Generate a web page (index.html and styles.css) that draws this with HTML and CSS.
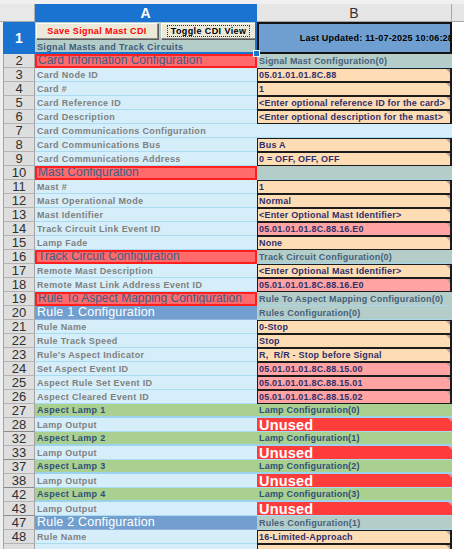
FILE: index.html
```html
<!DOCTYPE html>
<html>
<head>
<meta charset="utf-8">
<link rel="stylesheet" href="styles.css">
</head>
<body>
<div class="sheet">
  <div class="row hdr">
    <div class="corner"></div>
    <div class="ch cha">A</div>
    <div class="ch">B</div>
    <div class="ch chr"></div>
  </div>
  <div class="row r1">
    <div class="rh rhsel">1</div>
    <div class="a a1">
      <div class="btns">
        <div class="btn save">Save Signal Mast CDI</div>
        <div class="btn toggle"><span class="focus">Toggle CDI View</span></div>
      </div>
      <div class="a1txt">Signal Masts and Track Circuits</div>
    </div>
    <div class="b b1"><span>Last Updated: 11-07-2025 10:06:28</span></div>
    <div class="pad"></div>
  </div>
  <div class="row"><div class="rh">2</div><div class="a sec">Card Information Configuration</div><div class="b teal">Signal Mast Configuration(0)</div><div class="pad"></div></div>
  <div class="row"><div class="rh">3</div><div class="a lbl">Card Node ID</div><div class="b inp">05.01.01.01.8C.88</div><div class="pad"></div></div>
  <div class="row"><div class="rh">4</div><div class="a lbl">Card #</div><div class="b inp">1</div><div class="pad"></div></div>
  <div class="row"><div class="rh">5</div><div class="a lbl">Card Reference ID</div><div class="b inp">&lt;Enter optional reference ID for the card&gt;</div><div class="pad"></div></div>
  <div class="row"><div class="rh">6</div><div class="a lbl">Card Description</div><div class="b inp">&lt;Enter optional description for the mast&gt;</div><div class="pad"></div></div>
  <div class="row"><div class="rh">7</div><div class="a lbl">Card Communications Configuration</div><div class="b empty"></div><div class="pad"></div></div>
  <div class="row"><div class="rh">8</div><div class="a lbl">Card Communications Bus</div><div class="b inp">Bus A</div><div class="pad"></div></div>
  <div class="row"><div class="rh">9</div><div class="a lbl">Card Communications Address</div><div class="b inp">0 = OFF, OFF, OFF</div><div class="pad"></div></div>
  <div class="row"><div class="rh">10</div><div class="a sec">Mast Configuration</div><div class="b teal"></div><div class="pad"></div></div>
  <div class="row"><div class="rh">11</div><div class="a lbl">Mast #</div><div class="b inp">1</div><div class="pad"></div></div>
  <div class="row"><div class="rh">12</div><div class="a lbl">Mast Operational Mode</div><div class="b inp">Normal</div><div class="pad"></div></div>
  <div class="row"><div class="rh">13</div><div class="a lbl">Mast Identifier</div><div class="b inp">&lt;Enter Optional Mast Identifier&gt;</div><div class="pad"></div></div>
  <div class="row"><div class="rh">14</div><div class="a lbl">Track Circuit Link Event ID</div><div class="b inp evt">05.01.01.01.8C.88.16.E0</div><div class="pad"></div></div>
  <div class="row"><div class="rh">15</div><div class="a lbl">Lamp Fade</div><div class="b inp">None</div><div class="pad"></div></div>
  <div class="row"><div class="rh">16</div><div class="a sec">Track Circuit Configuration</div><div class="b teal">Track Circuit Configuration(0)</div><div class="pad"></div></div>
  <div class="row"><div class="rh">17</div><div class="a lbl">Remote Mast Description</div><div class="b inp">&lt;Enter Optional Mast Identifier&gt;</div><div class="pad"></div></div>
  <div class="row"><div class="rh">18</div><div class="a lbl">Remote Mast Link Address Event ID</div><div class="b inp evt">05.01.01.01.8C.88.16.E0</div><div class="pad"></div></div>
  <div class="row"><div class="rh">19</div><div class="a sec">Rule To Aspect Mapping Configuration</div><div class="b teal">Rule To Aspect Mapping Configuration(0)</div><div class="pad"></div></div>
  <div class="row"><div class="rh">20</div><div class="a rule">Rule 1 Configuration</div><div class="b teal">Rules Configuration(0)</div><div class="pad"></div></div>
  <div class="row"><div class="rh">21</div><div class="a lbl">Rule Name</div><div class="b inp">0-Stop</div><div class="pad"></div></div>
  <div class="row"><div class="rh">22</div><div class="a lbl">Rule Track Speed</div><div class="b inp">Stop</div><div class="pad"></div></div>
  <div class="row"><div class="rh">23</div><div class="a lbl">Rule's Aspect Indicator</div><div class="b inp">R,&nbsp; R/R - Stop before Signal</div><div class="pad"></div></div>
  <div class="row"><div class="rh">24</div><div class="a lbl">Set Aspect Event ID</div><div class="b inp evt">05.01.01.01.8C.88.15.00</div><div class="pad"></div></div>
  <div class="row"><div class="rh">25</div><div class="a lbl">Aspect Rule Set Event ID</div><div class="b inp evt">05.01.01.01.8C.88.15.01</div><div class="pad"></div></div>
  <div class="row"><div class="rh">26</div><div class="a lbl">Aspect Cleared Event ID</div><div class="b inp evt">05.01.01.01.8C.88.15.02</div><div class="pad"></div></div>
  <div class="row"><div class="rh">27</div><div class="a lamp">Aspect Lamp 1</div><div class="b lamp">Lamp Configuration(0)</div><div class="pad"></div></div>
  <div class="row"><div class="rh hid">28</div><div class="a lbl">Lamp Output</div><div class="b unused">Unused</div><div class="pad"></div></div>
  <div class="row"><div class="rh">32</div><div class="a lamp">Aspect Lamp 2</div><div class="b lamp">Lamp Configuration(1)</div><div class="pad"></div></div>
  <div class="row"><div class="rh hid">33</div><div class="a lbl">Lamp Output</div><div class="b unused">Unused</div><div class="pad"></div></div>
  <div class="row"><div class="rh">37</div><div class="a lamp">Aspect Lamp 3</div><div class="b lamp">Lamp Configuration(2)</div><div class="pad"></div></div>
  <div class="row"><div class="rh hid">38</div><div class="a lbl">Lamp Output</div><div class="b unused">Unused</div><div class="pad"></div></div>
  <div class="row"><div class="rh">42</div><div class="a lamp">Aspect Lamp 4</div><div class="b lamp">Lamp Configuration(3)</div><div class="pad"></div></div>
  <div class="row"><div class="rh hid">43</div><div class="a lbl">Lamp Output</div><div class="b unused">Unused</div><div class="pad"></div></div>
  <div class="row"><div class="rh">47</div><div class="a rule">Rule 2 Configuration</div><div class="b teal">Rules Configuration(1)</div><div class="pad"></div></div>
  <div class="row"><div class="rh">48</div><div class="a lbl">Rule Name</div><div class="b inp">16-Limited-Approach</div><div class="pad"></div></div>
  <div class="row"><div class="rh"></div><div class="a lbl"></div><div class="b inp"></div><div class="pad"></div></div>
  <div class="sel"></div>
  <div class="handle"></div>
</div>
</body>
</html>
```

FILE: styles.css
```css
html, body {
  margin: 0;
  padding: 0;
  background: #ffffff;
}
body {
  width: 464px;
  height: 549px;
  overflow: hidden;
  font-family: "Liberation Sans", Arial, sans-serif;
}
.sheet {
  position: relative;
  border-top: 4px solid #f0f0f0;
}
.row {
  display: grid;
  grid-template-columns: 35px 222px 195px 12px;
  height: 14px;
  background: linear-gradient(#efefef, #efefef) no-repeat 0 0 / 3px 100%;
}
.hdr { height: 18px; }
.r1 { height: 32px; }

/* column headers */
.corner {
  background: #e8e8e8;
  border-right: 1px solid #b0b0b0;
  border-bottom: 1px solid #a8a8a8;
}
.ch {
  box-sizing: border-box;
  background: #e6e6e6;
  border-right: 1px solid #a8a8a8;
  border-bottom: 1px solid #a8a8a8;
  font-size: 14px;
  color: #333;
  display: flex;
  align-items: center;
  justify-content: center;
}
.cha {
  background: #1a73d0;
  color: #fff;
  font-weight: bold;
  border-color: #1a73d0;
}
.chr { border-right: none; }

/* row headers */
.rh {
  box-sizing: border-box;
  margin-left: 3px;
  border-left: 1px solid #a4a4a4;
  border-right: 1px solid #a4a4a4;
  border-bottom: 1px solid #b4b4b4;
  background: #dedede;
  color: #2f2f2f;
  font-size: 13px;
  line-height: 12px;
  overflow: hidden;
  display: flex;
  align-items: center;
  justify-content: center;
}
.rhsel {
  background: #1a73d0;
  color: #fff;
  font-weight: bold;
  font-size: 14px;
  border-color: #1a73d0;
}
.hid {
  border-bottom-color: #8c8c8c;
  box-shadow: 0 1px 0 #8c8c8c;
}

/* generic cell */
.a, .b {
  box-sizing: border-box;
  display: flex;
  align-items: flex-end;
  white-space: nowrap;
  overflow: hidden;
  font-size: 9px;
  font-weight: bold;
  letter-spacing: 0.35px;
  line-height: 11px;
  padding-left: 2px;
}
.b { letter-spacing: 0.2px; }
.pad { background: #ffffff; }

.lbl {
  background: #d5eef9;
  border-bottom: 1px solid #a9dbf1;
  color: #808080;
}
.sec {
  background: #ff6b6b;
  border: 2px solid #ff1f1f;
  color: #3f5a86;
  font-weight: normal;
  font-size: 12px;
  letter-spacing: 0;
  line-height: 12px;
  padding-left: 1px;
}
.rule {
  background: #729fd0;
  border-bottom: 1px solid #8fb3dc;
  color: #ffffff;
  font-weight: normal;
  font-size: 12.5px;
  letter-spacing: 0.2px;
  line-height: 13px;
}
.teal {
  background: #b5cdc9;
  border-bottom: 1px solid #a8d6ea;
  color: #44607c;
}
.lamp {
  background: #a9d08e;
  border-bottom: 2px solid #9bd3ee;
  color: #2e4f7c;
}
.empty {
  background: #d5eef9;
  border-bottom: 1px solid #a9dbf1;
}
.inp {
  position: relative;
  background: #fedcb4;
  border: 1px solid #1c1c1c;
  border-right-width: 2px;
  color: #2f2f6b;
  padding-left: 1px;
}
.inp::after {
  content: "";
  position: absolute;
  top: 0;
  right: 0;
  border-top: 4px solid #b89a9a;
  border-left: 4px solid transparent;
}
.evt { background: #ffa3a3; }
.unused {
  position: relative;
  background: #ff3c3c;
  border-bottom: 1px solid #a9dbf1;
  color: #ffffff;
  font-size: 14.5px;
  letter-spacing: 0.2px;
  line-height: 14px;
  align-items: center;
  padding-left: 2px;
}
.unused::after {
  content: "";
  position: absolute;
  top: 0;
  right: 0;
  border-top: 4px solid #d8a0a0;
  border-left: 4px solid transparent;
}

/* row 1 */
.a1 {
  background: #b5cdc9;
  flex-direction: column;
  align-items: stretch;
  justify-content: space-between;
  padding: 1px 0 2px 1px;
  color: #3f5a78;
}
.btns {
  display: flex;
  gap: 3px;
  height: 16px;
}
.btn {
  box-sizing: border-box;
  background: #ece9d8;
  border: 1px solid #ffffff;
  border-right-color: #8a8a8a;
  border-bottom-color: #8a8a8a;
  box-shadow: 1px 1px 0 #5a5a5a;
  display: flex;
  align-items: center;
  justify-content: center;
  font-size: 9px;
  font-weight: bold;
  letter-spacing: 0.4px;
}
.save {
  width: 122px;
  color: #ff0000;
}
.toggle {
  width: 95px;
  color: #000;
}
.focus {
  border: 1px dotted #333;
  padding: 0 3px;
  line-height: 10px;
}
.a1txt {
  padding-left: 1px;
  line-height: 10px;
}
.b1 {
  background: #6f9fd0;
  border: 2px solid #141414;
  align-items: center;
  justify-content: flex-end;
  color: #000;
  padding: 0;
}
.b1 span {
  margin-right: -3px;
}

/* selection overlay */
.sel {
  position: absolute;
  left: 35px;
  top: 18px;
  width: 222px;
  height: 32px;
  box-sizing: border-box;
  border-right: 2px solid #1a73d0;
  border-bottom: 2px solid #1a73d0;
  pointer-events: none;
}
.handle {
  position: absolute;
  left: 253px;
  top: 46px;
  width: 5px;
  height: 5px;
  background: #1a73d0;
  border: 1px solid #ffffff;
}
```
